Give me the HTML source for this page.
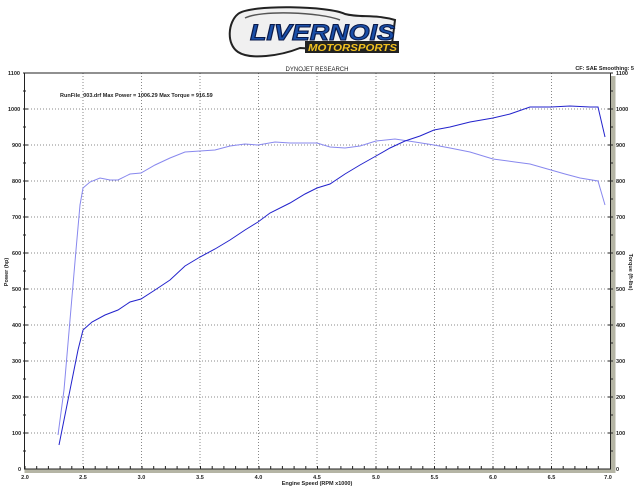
<!DOCTYPE html>
<html><head><style>
body{margin:0;width:639px;height:486px;background:#fff;overflow:hidden;font-family:"Liberation Sans",sans-serif}
</style></head><body>
<svg width="639" height="486" xmlns="http://www.w3.org/2000/svg" font-family="Liberation Sans, sans-serif">
<!-- logo -->
<path d="M238,14 C250,4 330,6 345,14 C360,18 375,14 395,20 L392,44 C370,52 330,50 300,48 C280,56 250,60 238,52 C226,44 228,22 238,14Z" fill="#f0f0f0" stroke="#222" stroke-width="2"/>
<path d="M245,18 C260,10 320,12 340,20" fill="none" stroke="#555" stroke-width="1.5"/>
<text x="250" y="40" font-size="22" font-weight="bold" font-style="italic" fill="#1a4fa8" stroke="#0a1a4a" stroke-width="1" textLength="145" lengthAdjust="spacingAndGlyphs">LIVERNOIS</text>
<rect x="305" y="41" width="94" height="12" fill="#222"/>
<text x="308" y="51" font-size="10" font-weight="bold" font-style="italic" fill="#f0c020" textLength="89" lengthAdjust="spacingAndGlyphs">MOTORSPORTS</text>
<text x="317" y="71" font-size="6" text-anchor="middle" fill="#222">DYNOJET RESEARCH</text>
<text x="634" y="70" font-size="5.5" text-anchor="end" font-weight="bold" fill="#222">CF: SAE  Smoothing: 5</text>
<!-- shadow -->
<rect x="24.5" y="469" width="590" height="4" fill="#b5b5a5"/>
<rect x="610.5" y="76" width="5" height="397" fill="#b5b5a5"/>
<!-- grid -->
<g stroke="#888" stroke-width="1" stroke-dasharray="1,2">
<line x1="25" x2="610" y1="109" y2="109"/><line x1="25" x2="610" y1="145" y2="145"/><line x1="25" x2="610" y1="181" y2="181"/><line x1="25" x2="610" y1="217" y2="217"/><line x1="25" x2="610" y1="253" y2="253"/><line x1="25" x2="610" y1="289" y2="289"/><line x1="25" x2="610" y1="325" y2="325"/><line x1="25" x2="610" y1="361" y2="361"/><line x1="25" x2="610" y1="397" y2="397"/><line x1="25" x2="610" y1="433" y2="433"/>
<line x1="83" x2="83" y1="73" y2="469"/><line x1="141.5" x2="141.5" y1="73" y2="469"/><line x1="200" x2="200" y1="73" y2="469"/><line x1="258.5" x2="258.5" y1="73" y2="469"/><line x1="317" x2="317" y1="73" y2="469"/><line x1="376" x2="376" y1="73" y2="469"/><line x1="434.5" x2="434.5" y1="73" y2="469"/><line x1="493" x2="493" y1="73" y2="469"/><line x1="551.5" x2="551.5" y1="73" y2="469"/>
</g>
<rect x="24.5" y="73" width="586" height="396" fill="none" stroke="#222" stroke-width="1"/>
<!-- ticks -->
<path stroke="#222" stroke-width="1" d="M25 469v-3M36.7 469v-3M48.4 469v-3M60.1 469v-3M71.8 469v-3M83.5 469v-3M95.2 469v-3M106.9 469v-3M118.6 469v-3M130.3 469v-3M142 469v-3M153.7 469v-3M165.4 469v-3M177.1 469v-3M188.8 469v-3M200.5 469v-3M212.2 469v-3M223.9 469v-3M235.6 469v-3M247.3 469v-3M259 469v-3M270.7 469v-3M282.4 469v-3M294.1 469v-3M305.8 469v-3M317.5 469v-3M329.2 469v-3M340.9 469v-3M352.6 469v-3M364.3 469v-3M376 469v-3M387.7 469v-3M399.4 469v-3M411.1 469v-3M422.8 469v-3M434.5 469v-3M446.2 469v-3M457.9 469v-3M469.6 469v-3M481.3 469v-3M493 469v-3M504.7 469v-3M516.4 469v-3M528.1 469v-3M539.8 469v-3M551.5 469v-3M563.2 469v-3M574.9 469v-3M586.6 469v-3M598.3 469v-3M23 73h5M23 91h3M23 109h5M23 127h3M23 145h5M23 163h3M23 181h5M23 199h3M23 217h5M23 235h3M23 253h5M23 271h3M23 289h5M23 307h3M23 325h5M23 343h3M23 361h5M23 379h3M23 397h5M23 415h3M23 433h5M23 451h3M608 73h5M610 91h3M608 109h5M610 127h3M608 145h5M610 163h3M608 181h5M610 199h3M608 217h5M610 235h3M608 253h5M610 271h3M608 289h5M610 307h3M608 325h5M610 343h3M608 361h5M610 379h3M608 397h5M610 415h3M608 433h5M610 451h3"/>
<g font-size="5.5" fill="#222" font-weight="bold">
<text x="8" y="75">1100</text><text x="8" y="111">1000</text><text x="12" y="147">900</text><text x="12" y="183">800</text><text x="12" y="219">700</text><text x="12" y="255">600</text><text x="12" y="291">500</text><text x="12" y="327">400</text><text x="12" y="363">300</text><text x="12" y="399">200</text><text x="12" y="435">100</text><text x="18" y="471">0</text>
<text x="616" y="75">1100</text><text x="616" y="111">1000</text><text x="616" y="147">900</text><text x="616" y="183">800</text><text x="616" y="219">700</text><text x="616" y="255">600</text><text x="616" y="291">500</text><text x="616" y="327">400</text><text x="616" y="363">300</text><text x="616" y="399">200</text><text x="616" y="435">100</text><text x="616" y="471">0</text>
<g text-anchor="middle"><text x="25" y="479">2.0</text><text x="83" y="479">2.5</text><text x="141.5" y="479">3.0</text><text x="200" y="479">3.5</text><text x="258.5" y="479">4.0</text><text x="317" y="479">4.5</text><text x="376" y="479">5.0</text><text x="434.5" y="479">5.5</text><text x="493" y="479">6.0</text><text x="551.5" y="479">6.5</text><text x="608" y="479">7.0</text></g>
<text x="317" y="485" text-anchor="middle">Engine Speed (RPM x1000)</text>
<text transform="translate(8,272) rotate(-90)" text-anchor="middle">Power (hp)</text>
<text transform="translate(629,272) rotate(90)" text-anchor="middle">Torque (ft-lbs)</text>
<text x="60" y="97">RunFile_003.drf Max Power = 1006.29     Max Torque = 916.59</text>
</g>
<!-- curves -->
<polyline fill="none" stroke="#8888ee" stroke-width="1" points="58,435 64,390 70,320 76,250 80,205 83,188 90,182 100,178 110,180 118,180 130,174 141,173 155,165 170,158 185,152 200,151 215,150 230,146 245,144 258,145 275,142 290,143 305,143 317,143 330,147 345,148 360,146 376,141 395,139 415,142 434,145 450,148 470,152 493,159 515,162 530,164 551,170 565,174 580,178 598,181 605,205"/>
<polyline fill="none" stroke="#2222cc" stroke-width="1" points="59,445 66,410 72,380 78,350 83,330 92,322 105,315 118,310 130,302 141,299 155,290 170,280 185,266 200,257 215,249 230,240 245,230 258,222 270,213 290,203 305,194 317,188 330,184 345,174 360,165 376,156 390,148 405,141 420,136 434,130 450,127 470,122 493,118 510,114 530,107 551,107 570,106 590,107 598,107 605,137"/>
</svg>
</body></html>
